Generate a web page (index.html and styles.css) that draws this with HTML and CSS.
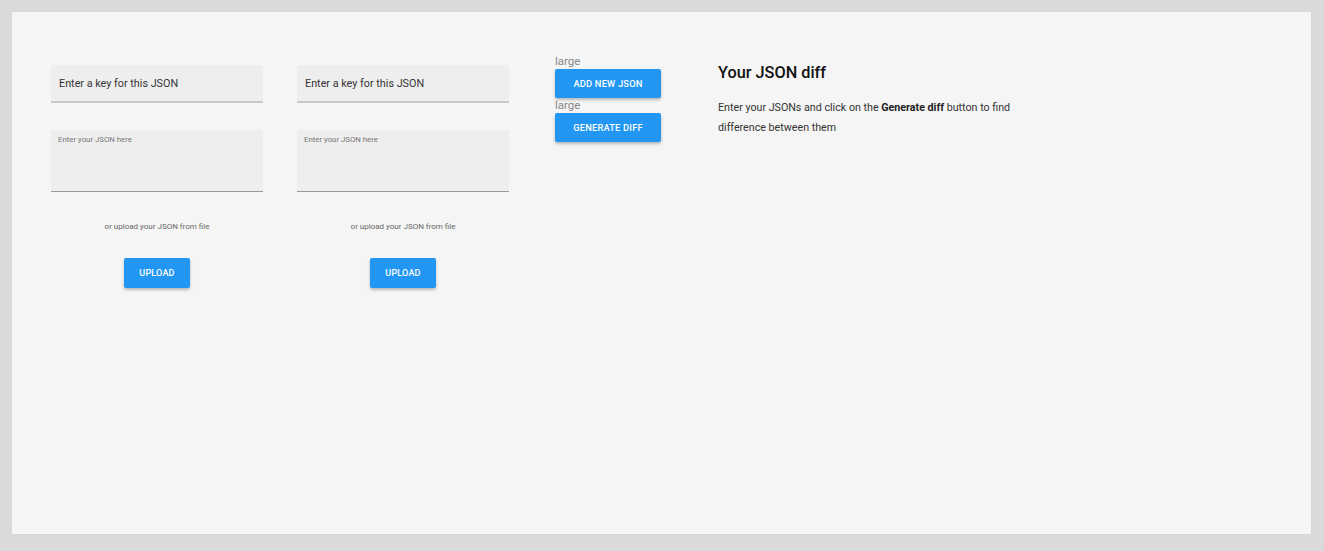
FILE: index.html
```html
<!DOCTYPE html>
<html>
<head>
<meta charset="utf-8">
<link rel="stylesheet" href="styles.css">
</head>
<body>
<div class="panel">
  <div class="json-col">
    <div class="key-input">Enter a key for this JSON</div>
    <div class="json-area">Enter your JSON here</div>
    <div class="upload-note">or upload your JSON from file</div>
    <div class="upload-row"><button class="btn btn-upload">UPLOAD</button></div>
  </div>
  <div class="json-col">
    <div class="key-input">Enter a key for this JSON</div>
    <div class="json-area">Enter your JSON here</div>
    <div class="upload-note">or upload your JSON from file</div>
    <div class="upload-row"><button class="btn btn-upload">UPLOAD</button></div>
  </div>
  <div class="actions">
    <div class="size-label">large</div>
    <button class="btn btn-action">ADD NEW JSON</button>
    <div class="size-label">large</div>
    <button class="btn btn-action">GENERATE DIFF</button>
  </div>
  <div class="diff">
    <h2 class="diff-title">Your JSON diff</h2>
    <p class="diff-text">Enter your JSONs and click on the <b>Generate diff</b> button to find difference between them</p>
  </div>
</div>
</body>
</html>
```
FILE: styles.css
```css
html, body {
  margin: 0;
  padding: 0;
}
body {
  background: #dadada;
  padding: 12px 13px 12px 12px;
  font-family: Roboto, "Liberation Sans", Arial, sans-serif;
}
.panel {
  background: #f5f5f5;
  height: 522px;
  box-sizing: border-box;
  padding: 53px 0 0 39px;
  display: flex;
  align-items: flex-start;
  box-shadow: 0 0 1px rgba(0,0,0,0.08);
}
.json-col {
  width: 212px;
  margin-right: 34px;
  display: flex;
  flex-direction: column;
}
.key-input {
  height: 36px;
  background: #eeeeee;
  border-bottom: 2px solid #c9c9c9;
  box-sizing: content-box;
  padding-left: 8px;
  font-size: 10.8px;
  color: #333;
  line-height: 38px;
}
.json-area {
  margin-top: 27px;
  height: 62px;
  background: #eeeeee;
  border-bottom: 1px solid #9a9a9a;
  padding: 5px 7px 0;
  box-sizing: border-box;
  font-size: 7.8px;
  color: #777;
}
.upload-note {
  margin-top: 30px;
  text-align: center;
  font-size: 8px;
  color: #666;
}
.upload-row {
  display: flex;
  justify-content: center;
  margin-top: 27px;
}
.btn {
  background: #2196f3;
  color: #fff;
  border: none;
  border-radius: 2px;
  font-family: Roboto, "Liberation Sans", Arial, sans-serif;
  font-weight: 500;
  font-size: 9px;
  letter-spacing: 0.2px;
  box-shadow: 0 2px 3px rgba(0,0,0,0.25);
  padding: 0;
  cursor: pointer;
}
.btn-upload {
  width: 66px;
  height: 30px;
}
.actions {
  margin-left: 12px;
  width: 106px;
  margin-top: -10px;
  display: flex;
  flex-direction: column;
}
.size-label {
  font-size: 11.5px;
  color: #888;
  line-height: 13px;
  height: 14px;
}
.btn-action {
  width: 106px;
  height: 29px;
  margin-bottom: 1px;
  font-size: 9.3px;
}
.diff {
  margin-left: 57px;
  margin-top: -3px;
  width: 320px;
}
.diff-title {
  margin: 0;
  font-size: 16.3px;
  font-weight: 500;
  color: #111;
  line-height: 22px;
}
.diff-text {
  margin: 14px 0 0;
  font-size: 10.7px;
  line-height: 20px;
  color: #333;
}
.diff-text b {
  font-weight: 700;
  color: #222;
}
```
